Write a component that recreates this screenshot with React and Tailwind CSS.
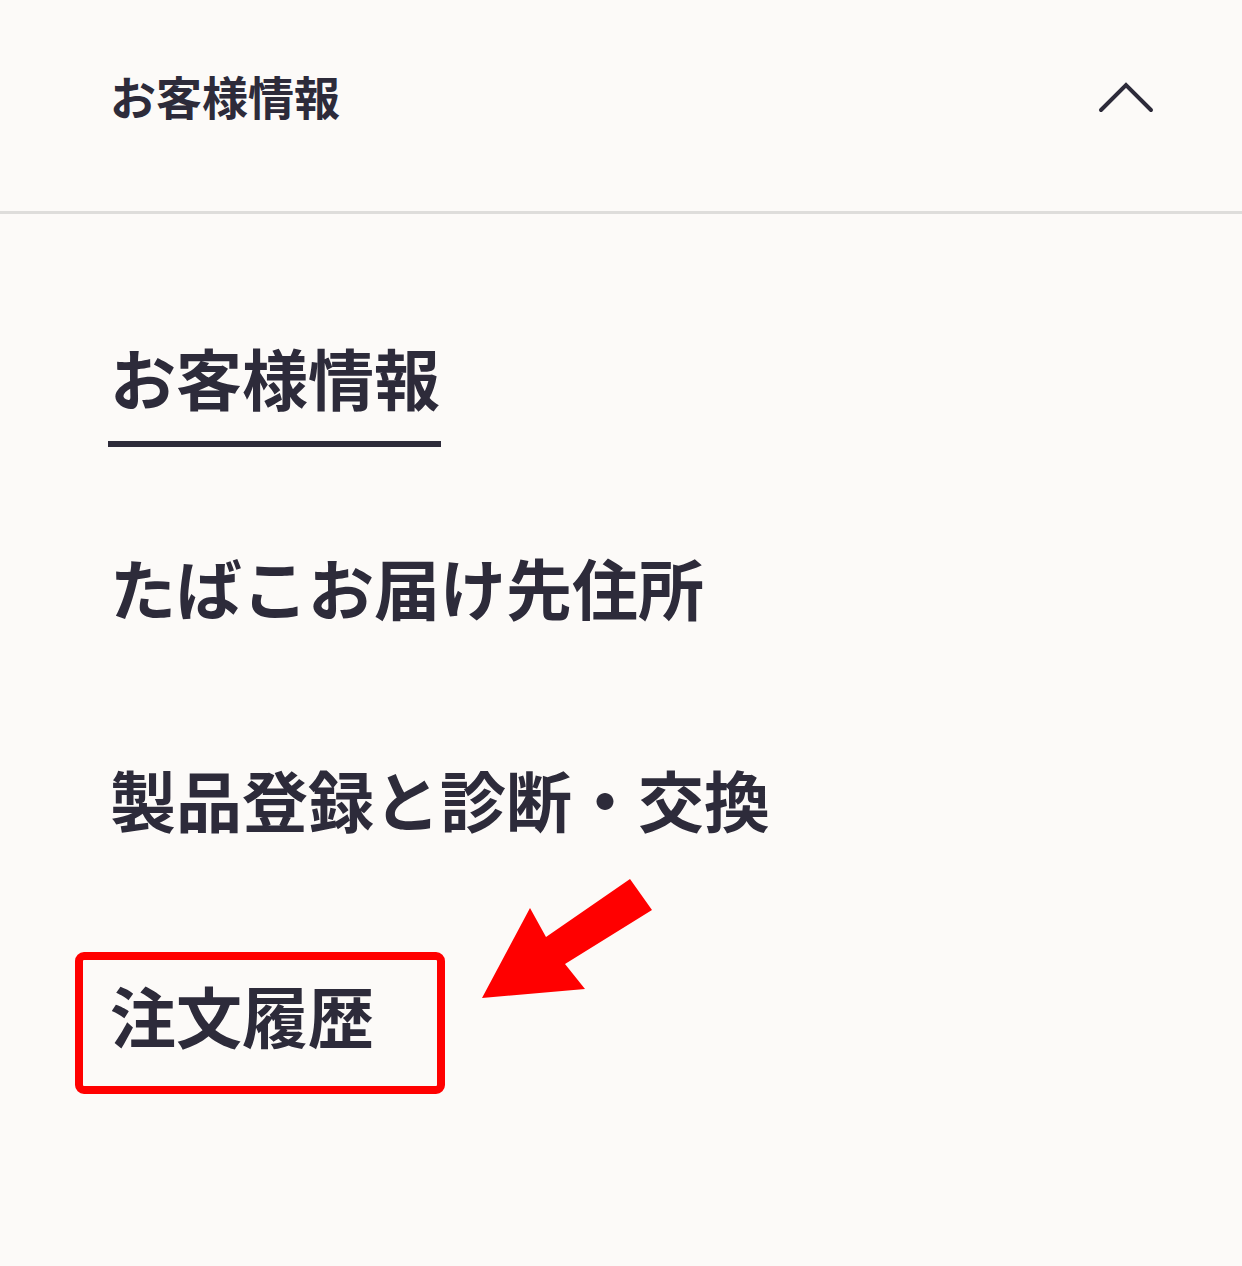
export default function App() {
  const font = { fontFamily: '"Noto Sans CJK JP", "Noto Sans", sans-serif' };
  return (
    <div className="relative w-full h-[1266px] bg-[#fcfaf8] text-[#2d2b3a] overflow-hidden" style={font}>
      <header className="h-[214px] flex items-center justify-between pl-[110px] pr-[88px] border-b-[3px] border-[#dedddb] pb-[22px]">
        <span className="text-[46px] leading-[46px] font-bold">お客様情報</span>
        <svg width="56" height="32" viewBox="0 0 56 32" className="mt-[6px]">
          <polyline points="3,28 28,3 53,28" fill="none" stroke="#2d2b3a" strokeWidth="4" strokeLinecap="round" strokeLinejoin="miter" />
        </svg>
      </header>
      <main className="pl-[110px] pt-[129px] flex flex-col items-start">
        <div className="text-[66px] leading-[66px] font-bold border-b-[6px] border-[#2d2b3a] pb-[32px] pr-[1px] ml-[-2px] pl-[2px]">お客様情報</div>
        <div className="mt-[106px] text-[66px] leading-[66px] font-bold">たばこお届け先住所</div>
        <div className="mt-[146px] text-[66px] leading-[66px] font-bold">製品登録と診断・交換</div>
        <div className="mt-[121px] ml-[-35px] w-[370px] border-[8px] border-[#ff0000] rounded-[9px] pl-[27px] pt-[21px] pb-[39px]">
          <div className="text-[66px] leading-[66px] font-bold">注文履歴</div>
        </div>
      </main>
      <svg className="absolute inset-0 pointer-events-none" width="1242" height="1266" viewBox="0 0 1242 1266">
        <polygon points="482,998 530,908 546,937 630,879 652,910 565,964 585,989" fill="#ff0000" />
      </svg>
    </div>
  );
}
